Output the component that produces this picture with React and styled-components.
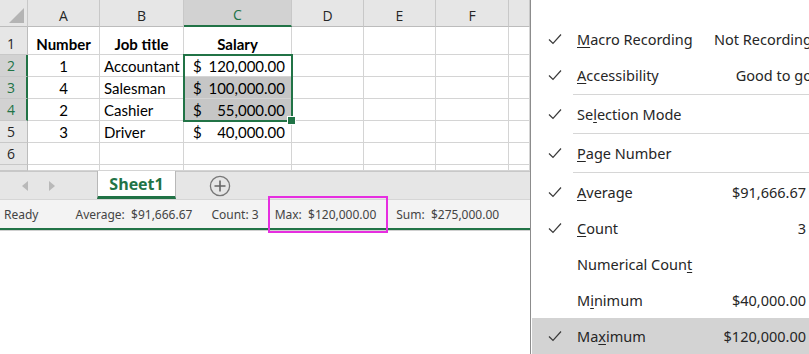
import React from 'react';
import styled, { createGlobalStyle } from 'styled-components';

const GlobalStyle = createGlobalStyle`
  html, body { margin: 0; padding: 0; background: #fff; }
  * { box-sizing: border-box; }
`;

const green = '#217346';

const Page = styled.div`
  display: flex;
  width: 809px;
  height: 354px;
  overflow: hidden;
  background: #fff;
`;

// ---- spreadsheet side ----
const Workbook = styled.div`
  width: 530px;
  flex: none;
  display: flex;
  flex-direction: column;
  align-self: flex-start;
  border-bottom: 2px solid ${green};
  box-shadow: 0 1px 0 #d0d0d0;
`;

const Grid = styled.div`
  position: relative;
  display: grid;
  grid-template-columns: 28px 72px 84px 108px 72px 72px 73px 21px;
  grid-template-rows: 27px 28px repeat(5, 22px) 6px;
  overflow: hidden;
  background: #fff;
  font-family: Lato, "Liberation Sans", sans-serif;
  font-size: 15px;
  color: #000;
`;

const Corner = styled.div`
  background: #e6e6e6;
  border-right: 1px solid #c8c8c8;
  border-bottom: 1px solid #bcbcbc;
  display: flex;
  align-items: flex-end;
  justify-content: flex-end;
  padding: 0 3px 3px 0;
  &::after {
    content: '';
    width: 0;
    height: 0;
    border-left: 15px solid transparent;
    border-bottom: 15px solid #b4b4b4;
  }
`;

const ColHead = styled.div`
  background: ${p => (p.$on ? '#d2d2d2' : '#e6e6e6')};
  color: ${p => (p.$on ? green : '#262626')};
  border-right: 1px solid #c8c8c8;
  border-bottom: ${p => (p.$on ? `2px solid ${green}` : '1px solid #bcbcbc')};
  display: flex;
  align-items: center;
  justify-content: center;
  padding-top: 4px;
  font-family: "Open Sans", "Noto Sans", sans-serif;
  font-size: 14px;
`;

const RowHead = styled.div`
  background: ${p => (p.$on ? '#d2d2d2' : '#e6e6e6')};
  color: ${p => (p.$on ? green : '#262626')};
  border-bottom: 1px solid #c8c8c8;
  border-right: ${p => (p.$on ? `2px solid ${green}` : '1px solid #bcbcbc')};
  display: flex;
  align-items: flex-end;
  padding: 0 0 1px 7px;
  font-family: "Open Sans", "Noto Sans", sans-serif;
  font-size: 14px;
`;

const Cell = styled.div`
  position: relative;
  border-right: 1px solid #d4d4d4;
  border-bottom: 1px solid #d4d4d4;
  background: ${p => (p.$shade ? '#c6c6c6' : '#fff')};
  display: flex;
  align-items: flex-end;
  justify-content: ${p => p.$align || 'flex-start'};
  padding: ${p => (p.$flush ? '0 0 1px' : '0 4px 1px')};
  font-weight: ${p => (p.$bold ? 700 : 400)};
  white-space: nowrap;
  overflow: visible;
  z-index: ${p => (p.$spill ? 1 : 0)};
`;

const Money = styled.span`
  display: flex;
  justify-content: space-between;
  width: 100%;
  padding: 0 6px 0 9px;
  white-space: pre;
`;

const Selection = styled.div`
  position: absolute;
  left: 183px;
  top: 54px;
  width: 110px;
  height: 68px;
  border: 2px solid ${green};
  z-index: 2;
  pointer-events: none;
  &::after {
    content: '';
    position: absolute;
    right: -5px;
    bottom: -5px;
    width: 7px;
    height: 7px;
    background: ${green};
    border: 1px solid #fff;
  }
`;

const TabBar = styled.div`
  height: 28px;
  background: #e6e6e6;
  border-top: 1px solid #c8c8c8;
  display: flex;
  align-items: stretch;
  font-family: "Open Sans", "Noto Sans", sans-serif;
`;

const Arrows = styled.div`
  width: 97px;
  display: flex;
  align-items: center;
  gap: 21px;
  padding-left: 22px;
`;

const Arrow = styled.span`
  width: 0;
  height: 0;
  border-top: 5px solid transparent;
  border-bottom: 5px solid transparent;
  ${p => (p.$left ? 'border-right: 6px solid #b9b9b9;' : 'border-left: 6px solid #b9b9b9;')}
`;

const SheetTab = styled.div`
  width: 79px;
  margin-top: -1px;
  background: #fff;
  border-left: 1px solid #b8b8b8;
  border-right: 1px solid #b8b8b8;
  border-bottom: 3px solid ${green};
  display: flex;
  align-items: center;
  justify-content: center;
  color: ${green};
  font-weight: 700;
  font-size: 16px;
  padding-top: 1px;
`;

const AddSheet = styled.div`
  margin-left: 33px;
  display: flex;
  align-items: center;
`;

const StatusBar = styled.div`
  position: relative;
  height: 29px;
  background: #f3f3f3;
  border-top: 1px solid #d6d6d6;
  display: flex;
  align-items: center;
  padding: 1px 0 0 4px;
  font-family: "Noto Sans", "Open Sans", sans-serif;
  font-size: 12px;
  color: #444;
  white-space: pre;
`;

const Stat = styled.span`
  margin-left: ${p => p.$gap || 0}px;
`;

const Callout = styled.div`
  position: absolute;
  left: 268px;
  top: -4px;
  width: 120px;
  height: 37px;
  border: 2px solid #e62ee0;
  z-index: 3;
`;

// ---- status bar customisation menu ----
const Menu = styled.div`
  flex: 1;
  border-left: 1px solid #8c8c8c;
  padding: 21px 0 0 1px;
  font-family: "Noto Sans", "Open Sans", sans-serif;
  font-size: 14.5px;
  color: #262626;
  white-space: nowrap;
  overflow: hidden;
`;

const Item = styled.div`
  height: 36px;
  display: flex;
  align-items: center;
  background: ${p => (p.$hover ? '#d3d3d3' : 'transparent')};
`;

const Tick = styled.span`
  width: 45px;
  flex: none;
  display: flex;
  justify-content: flex-start;
  padding-left: 16px;
`;

const Label = styled.span`
  flex: 1;
  u { text-underline-offset: 2px; }
`;

const Value = styled.span`
  padding-right: 3px;
  margin-right: ${p => (p.$bleed ? '-6px' : '0')};
`;

const Divider = styled.div`
  height: 3px;
  margin-left: 41px;
  display: flex;
  align-items: center;
  &::before {
    content: '';
    flex: 1;
    height: 1px;
    background: #d6d6d6;
  }
`;

const Check = () => (
  <svg width="14" height="12" viewBox="0 0 14 12">
    <path d="M1 6.5 L5 10.5 L13 1.5" fill="none" stroke="#3a3a3a" strokeWidth="1.2" />
  </svg>
);

const rows = [
  ['1', 'Accountant', '$', '120,000.00'],
  ['4', 'Salesman', '$', '100,000.00'],
  ['2', 'Cashier', '$', '  55,000.00'],
  ['3', 'Driver', '$', '  40,000.00'],
];

const menuItems = [
  { on: true, label: [<u key="u">M</u>, 'acro Recording'], value: 'Not Recording', bleed: true },
  { on: true, label: [<u key="u">A</u>, 'ccessibility'], value: 'Good to go', bleed: true, sep: true },
  { on: true, label: ['Se', <u key="u">l</u>, 'ection Mode'], sep: true },
  { on: true, label: [<u key="u">P</u>, 'age Number'], sep: true },
  { on: true, label: [<u key="u">A</u>, 'verage'], value: '$91,666.67' },
  { on: true, label: [<u key="u">C</u>, 'ount'], value: '3' },
  { on: false, label: ['Numerical Coun', <u key="u">t</u>] },
  { on: false, label: ['M', <u key="u">i</u>, 'nimum'], value: '$40,000.00' },
  { on: true, label: ['Ma', <u key="u">x</u>, 'imum'], value: '$120,000.00', hover: true },
];

const cols = ['A', 'B', 'C', 'D', 'E', 'F', ''];
const blanks = n => Array.from({ length: n }, (_, j) => <Cell key={j} />);

export default function App() {
  return (
    <Page>
      <GlobalStyle />
      <Workbook>
        <Grid>
          <Corner />
          {cols.map(c => (
            <ColHead key={c || 'g'} $on={c === 'C'}>{c}</ColHead>
          ))}

          <RowHead>1</RowHead>
          <Cell $bold $align="center">Number</Cell>
          <Cell $bold $align="center">Job title</Cell>
          <Cell $bold $align="center">Salary</Cell>
          {blanks(4)}

          {rows.map((r, i) => (
            <React.Fragment key={i}>
              <RowHead $on={i < 3}>{i + 2}</RowHead>
              <Cell $align="center">{r[0]}</Cell>
              <Cell $spill>{r[1]}</Cell>
              <Cell $flush $shade={i === 1 || i === 2}>
                <Money><span>{r[2]}</span><span>{r[3]}</span></Money>
              </Cell>
              {blanks(4)}
            </React.Fragment>
          ))}

          <RowHead>6</RowHead>
          {blanks(7)}
          <RowHead />
          {blanks(7)}

          <Selection />
        </Grid>

        <TabBar>
          <Arrows>
            <Arrow $left />
            <Arrow />
          </Arrows>
          <SheetTab>Sheet1</SheetTab>
          <AddSheet>
            <svg width="22" height="22" viewBox="0 0 22 22">
              <circle cx="11" cy="11" r="9.6" fill="none" stroke="#777" strokeWidth="1.3" />
              <path d="M11 5.5 V16.5 M5.5 11 H16.5" stroke="#666" strokeWidth="1.6" />
            </svg>
          </AddSheet>
        </TabBar>

        <StatusBar>
          <Stat>Ready</Stat>
          <Stat $gap={37}>Average:  $91,666.67</Stat>
          <Stat $gap={19}>Count: 3</Stat>
          <Stat $gap={16}>Max:  $120,000.00</Stat>
          <Stat $gap={20}>Sum:  $275,000.00</Stat>
          <Callout />
        </StatusBar>
      </Workbook>

      <Menu>
        {menuItems.map((m, i) => (
          <React.Fragment key={i}>
            <Item $hover={m.hover}>
              <Tick>{m.on && <Check />}</Tick>
              <Label>{m.label}</Label>
              {m.value && <Value $bleed={m.bleed}>{m.value}</Value>}
            </Item>
            {m.sep && <Divider />}
          </React.Fragment>
        ))}
      </Menu>
    </Page>
  );
}
